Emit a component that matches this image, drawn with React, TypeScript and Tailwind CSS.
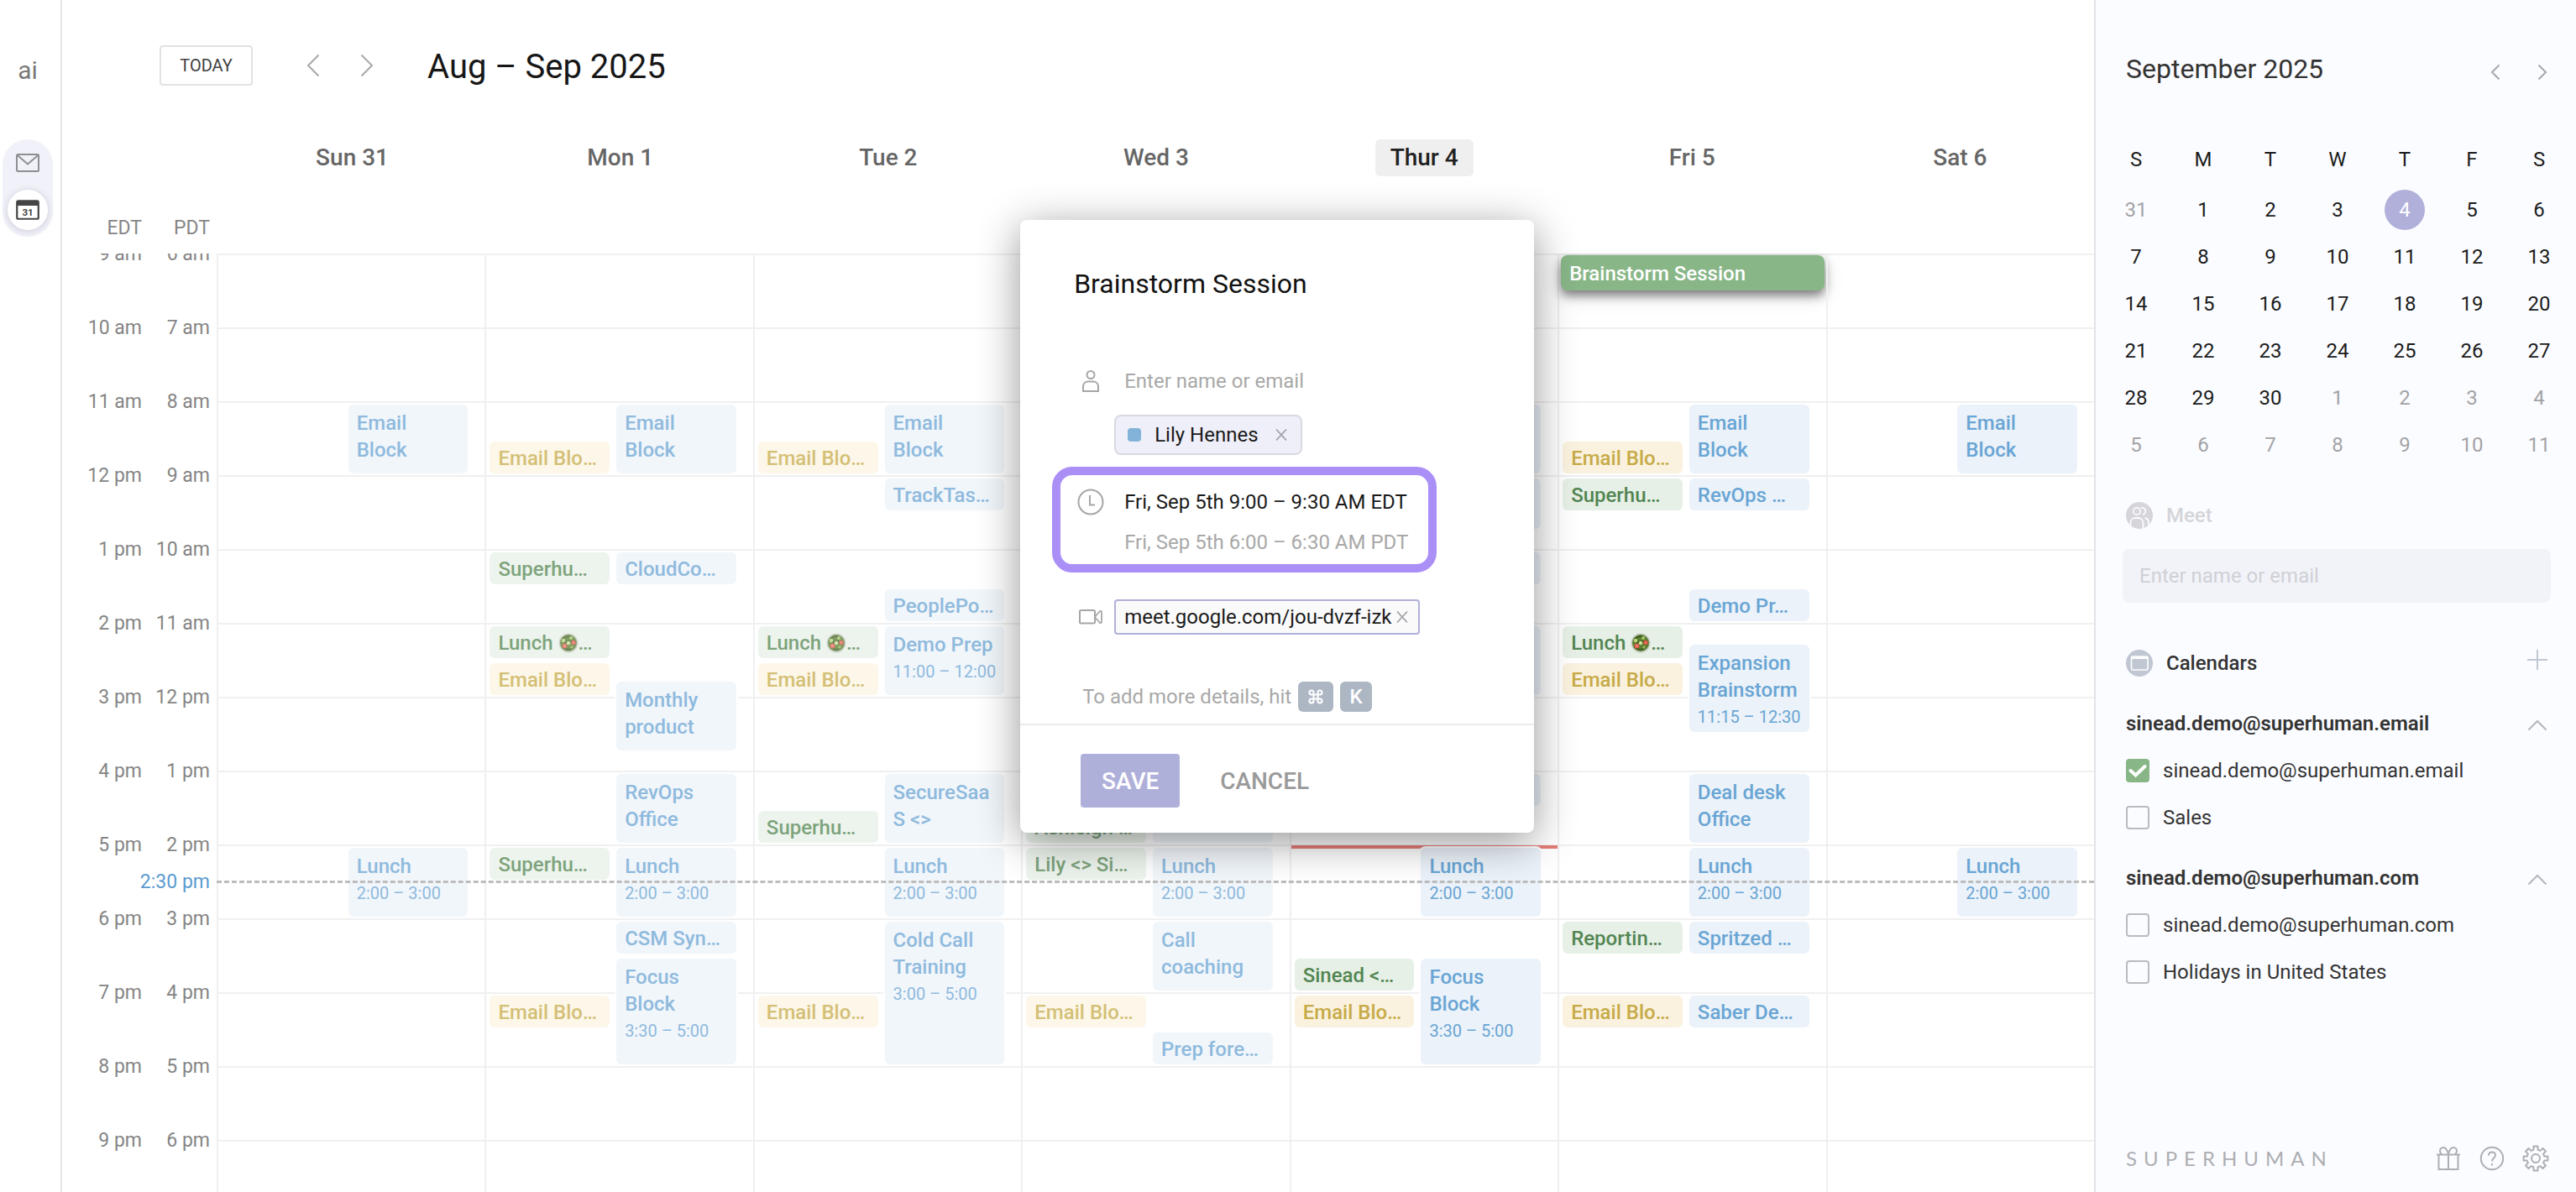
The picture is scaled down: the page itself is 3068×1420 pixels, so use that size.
import { useState } from "react";
import type { ReactNode } from "react";
import { clsx } from "clsx";
import { Command } from "lucide-react";

type Tone = "blue" | "green" | "yellow";

interface CalEvent {
  title: string;
  salad?: boolean;
  time?: string;
  tone: Tone;
  /** PDT hour, 24h clock. Quarter hours are .25 steps */
  start: number;
  end: number;
}

interface Day {
  label: string;
  past?: boolean;
  today?: boolean;
  events: CalEvent[];
}

const FIRST_HOUR = 6;

const ev = (tone: Tone, title: string, start: number, end: number, time?: string): CalEvent => ({
  tone,
  title,
  start,
  end,
  time,
});

const salad = (): CalEvent => ({ tone: "green", title: "Lunch", salad: true, start: 11, end: 11.5 });
const emailBlock = () => ev("blue", "Email Block", 8, 9);
const emailShort = (start: number) => ev("yellow", "Email Blo…", start, start + 0.5);
const lunch = () => ev("blue", "Lunch", 14, 15, "2:00 – 3:00");
const focus = () => ev("blue", "Focus Block", 15.5, 17, "3:30 – 5:00");

const days: Day[] = [
  { label: "Sun 31", past: true, events: [emailBlock(), lunch()] },
  {
    label: "Mon 1",
    past: true,
    events: [
      emailBlock(),
      emailShort(8.5),
      ev("green", "Superhu…", 10, 10.5),
      ev("blue", "CloudCo…", 10, 10.5),
      salad(),
      emailShort(11.5),
      ev("blue", "Monthly product", 11.75, 12.75),
      ev("blue", "RevOps Office", 13, 14),
      ev("green", "Superhu…", 14, 14.5),
      lunch(),
      ev("blue", "CSM Syn…", 15, 15.5),
      focus(),
      emailShort(16),
    ],
  },
  {
    label: "Tue 2",
    past: true,
    events: [
      emailBlock(),
      emailShort(8.5),
      ev("blue", "TrackTas…", 9, 9.5),
      ev("blue", "PeoplePo…", 10.5, 11),
      salad(),
      ev("blue", "Demo Prep", 11, 12, "11:00 – 12:00"),
      emailShort(11.5),
      ev("blue", "SecureSaaS <>", 13, 14),
      ev("green", "Superhu…", 13.5, 14),
      lunch(),
      ev("blue", "Cold Call Training", 15, 17, "3:00 – 5:00"),
      emailShort(16),
    ],
  },
  {
    label: "Wed 3",
    past: true,
    events: [
      ev("green", "Ashleigh …", 13.5, 14),
      ev("blue", "", 13, 14),
      ev("green", "Lily <> Si…", 14, 14.5),
      lunch(),
      ev("blue", "Call coaching", 15, 16),
      emailShort(16),
      ev("blue", "Prep fore…", 16.5, 17),
    ],
  },
  {
    label: "Thur 4",
    today: true,
    events: [
      ev("blue", "", 8, 9),
      ev("blue", "", 9, 9.75),
      ev("blue", "", 10, 10.5),
      ev("blue", "", 11, 12),
      ev("blue", "", 13, 13.5),
      lunch(),
      ev("green", "Sinead <…", 15.5, 16),
      focus(),
      emailShort(16),
    ],
  },
  {
    label: "Fri 5",
    events: [
      emailBlock(),
      emailShort(8.5),
      ev("green", "Superhu…", 9, 9.5),
      ev("blue", "RevOps …", 9, 9.5),
      ev("blue", "Demo Pr…", 10.5, 11),
      salad(),
      ev("blue", "Expansion Brainstorm", 11.25, 12.5, "11:15 – 12:30"),
      emailShort(11.5),
      ev("blue", "Deal desk Office", 13, 14),
      lunch(),
      ev("green", "Reportin…", 15, 15.5),
      ev("blue", "Spritzed …", 15, 15.5),
      emailShort(16),
      ev("blue", "Saber De…", 16, 16.5),
    ],
  },
  { label: "Sat 6", events: [emailBlock(), lunch()] },
];

const hours = [
  ["9 am", "6 am"],
  ["10 am", "7 am"],
  ["11 am", "8 am"],
  ["12 pm", "9 am"],
  ["1 pm", "10 am"],
  ["2 pm", "11 am"],
  ["3 pm", "12 pm"],
  ["4 pm", "1 pm"],
  ["5 pm", "2 pm"],
  ["6 pm", "3 pm"],
  ["7 pm", "4 pm"],
  ["8 pm", "5 pm"],
  ["9 pm", "6 pm"],
];

const tones: Record<Tone, { past: string; upcoming: string }> = {
  blue: { past: "bg-[#f1f6fb] text-[#8fbadd]", upcoming: "bg-[#ebf2f9] text-[#69a5d4]" },
  green: { past: "bg-[#edf4ed] text-[#7da37c]", upcoming: "bg-[#e6f0e6] text-[#528552]" },
  yellow: { past: "bg-[#fcf7e8] text-[#d4bf76]", upcoming: "bg-[#faf2de] text-[#c7aa48]" },
};

function Svg({ className, children, viewBox = "0 0 32 32" }: { className?: string; children: ReactNode; viewBox?: string }) {
  return (
    <svg
      viewBox={viewBox}
      fill="none"
      stroke="currentColor"
      strokeWidth={2}
      className={clsx("shrink-0", className)}
      aria-hidden="true"
    >
      {children}
    </svg>
  );
}

function Salad() {
  return (
    <svg viewBox="0 0 24 24" className="size-6 shrink-0" aria-hidden="true">
      <circle cx="12" cy="12" r="11.5" fill="#c9cdc2" />
      <circle cx="12" cy="12" r="10" fill="#5d7f35" />
      <path d="M4 9c3-5 8-6 11-4M5 17c5 4 10 3 13 0M7 12c4-3 7-1 10-2" stroke="#3f5e22" strokeWidth="2" fill="none" />
      <circle cx="6" cy="9" r="2.2" fill="#b9d97c" />
      <circle cx="15" cy="6" r="2" fill="#a6cc6a" />
      <circle cx="12" cy="12" r="2.2" fill="#cbe59a" />
      <circle cx="16" cy="17" r="1.8" fill="#8fb656" />
      <circle cx="18" cy="11.5" r="2.8" fill="#d8503f" />
      <circle cx="7.5" cy="15.5" r="3" fill="#dd5a48" />
      <circle cx="18" cy="11.5" r="1.1" fill="#f0907f" />
      <circle cx="7.5" cy="15.5" r="1.2" fill="#f0907f" />
    </svg>
  );
}

const gearPath = (() => {
  const pts: string[] = [];
  for (let i = 0; i < 8; i++) {
    const base = (i * Math.PI) / 4;
    [
      [-0.25, 10.6],
      [-0.17, 14.6],
      [0.17, 14.6],
      [0.25, 10.6],
    ].forEach(([a, r]) => {
      pts.push(`${16 + r * Math.sin(base + a)} ${16 - r * Math.cos(base + a)}`);
    });
  }
  return `M${pts.join("L")}Z`;
})();

function Close({ className }: { className?: string }) {
  return (
    <Svg viewBox="0 0 14 16" className={clsx("w-[14px] h-4", className)}>
      <path d="M1 1.5l12 13M13 1.5l-12 13" strokeWidth={1.8} />
    </Svg>
  );
}

function Rail() {
  return (
    <nav className="shrink-0 w-[74px] border-r-2 border-[#e6e6e8] pr-1.5 flex flex-col items-center pt-16">
      <span className="text-[30px] leading-10 text-[#7a7a7a]">ai</span>
      <div className="mt-[62px] w-[60px] rounded-full bg-[#f1f2f9] flex flex-col items-center pt-1 pb-2 gap-2">
        <a href="#mail" aria-label="Mail" className="size-12 flex items-center justify-center text-[#8e8e94]">
          <Svg viewBox="0 0 28 22" className="w-7 h-[22px]">
            <rect x="1" y="1" width="26" height="20" rx="1.5" />
            <path d="M1.5 1.8L14 12.5 26.5 1.8" />
          </Svg>
        </a>
        <a
          href="#calendar"
          aria-label="Calendar"
          className="size-12 rounded-full bg-white shadow-[0_1px_8px_rgba(60,60,90,0.22)] flex items-center justify-center"
        >
          <svg viewBox="0 0 28 24" className="w-7 h-6 shrink-0" aria-hidden="true">
            <rect x="1.25" y="1.25" width="25.5" height="21.5" rx="1.5" fill="#fff" stroke="#444" strokeWidth="2.2" />
            <path d="M1 1h26v6H1z" fill="#444" />
            <text x="14" y="18.5" textAnchor="middle" fontSize="11.5" fontWeight="700" fill="#444">
              31
            </text>
          </svg>
        </a>
      </div>
    </nav>
  );
}

function EventCard({ event, past }: { event: CalEvent; past?: boolean }) {
  const compact = event.end - event.start <= 0.5;
  const from = Math.round((event.start - FIRST_HOUR) * 4) + 1;
  const to = Math.round((event.end - FIRST_HOUR) * 4) + 1;

  return (
    <article
      style={{ gridRow: `${from} / ${to}` }}
      className={clsx(
        "relative mt-1 mb-0.5 rounded-md pl-2.5 pr-2 text-2xl leading-8 overflow-hidden ring-2 ring-white min-w-0",
        event.tone === "blue" ? "col-start-2" : "col-start-1",
        past ? tones[event.tone].past : tones[event.tone].upcoming,
        compact ? "flex items-center whitespace-nowrap pt-0.5" : "pt-1.5"
      )}
    >
      <h3 className={clsx("font-medium", event.salad && "flex items-center", !compact && "break-words")}>
        {event.salad ? (
          <>
            <span className="mr-1.5">{event.title}</span>
            <span className={clsx(past && "opacity-75")}>
              <Salad />
            </span>
            <span>…</span>
          </>
        ) : (
          event.title
        )}
      </h3>
      {event.time && <p className="-mr-1.5 text-xl leading-8 whitespace-nowrap">{event.time}</p>}
    </article>
  );
}

function WeekView() {
  return (
    <main className="relative flex-1 min-w-0 flex flex-col">
      <header className="shrink-0 h-[156px] flex items-center pl-[116px]">
        <button className="h-12 w-[111px] rounded border-2 border-[#e2e2e2] text-xl text-[#404040]">TODAY</button>
        <button aria-label="Previous week" className="ml-16 text-[#a8a8a8]">
          <Svg viewBox="0 0 16 28" className="w-4 h-7">
            <path d="M14.5 1.5L2 14l12.5 12.5" />
          </Svg>
        </button>
        <button aria-label="Next week" className="ml-12 text-[#a8a8a8]">
          <Svg viewBox="0 0 16 28" className="w-4 h-7">
            <path d="M1.5 1.5L14 14 1.5 26.5" />
          </Svg>
        </button>
        <h1 className="ml-16 pt-1 text-[40px] leading-[48px] text-[#171717]">Aug – Sep 2025</h1>
      </header>

      <div className="shrink-0 h-16 pl-[186px] grid grid-cols-7 items-center justify-items-center text-[28px] leading-8 font-medium text-[#666]">
        {days.map((day) => (
          <h2
            key={day.label}
            className={clsx("h-11 px-[18px] rounded-md flex items-center", day.today && "bg-[#efefef] text-[#222]")}
          >
            {day.label}
          </h2>
        ))}
      </div>

      <div className="shrink-0 h-[82px] w-[184px] grid grid-cols-[95px_81px] items-end text-right text-[23px] leading-8 text-[#858585] pb-3.5">
        <span>EDT</span>
        <span>PDT</span>
      </div>

      <div className="flex-1 min-h-0 flex overflow-hidden">
        <div className="relative shrink-0 w-[184px] text-[23px] leading-10 text-[#858585]">
          <div className="-mt-[19px]">
            {hours.map(([edt, pdt]) => (
              <div key={edt} className="h-[88px] grid grid-cols-[95px_81px] text-right">
                <span>{edt}</span>
                <span>{pdt}</span>
              </div>
            ))}
          </div>
          <span className="absolute right-2 top-[729px] text-[#5b9bd0]">2:30 pm</span>
        </div>

        <div className="relative flex-1 h-[1144px] grid grid-cols-7 bg-[linear-gradient(#f0f0f0_2px,transparent_2px)] bg-[length:100%_88px]">
          {days.map((day) => (
            <section
              key={day.label}
              aria-label={day.label}
              className="relative min-w-0 border-l-2 border-[#f0f0f0] pl-1 pr-5 grid grid-cols-2 gap-x-2 auto-rows-[22px]"
            >
              {day.today && <div className="absolute inset-x-0 top-[705px] h-1 bg-[#e67c78]" />}
              {day.events.map((event, i) => (
                <EventCard key={i} event={event} past={day.past} />
              ))}
              {day.label === "Fri 5" && (
                <article className="absolute left-0.5 right-0.5 top-0.5 h-[42px] rounded-lg bg-[#88b687] px-2.5 pt-0.5 flex items-center text-2xl font-medium text-white shadow-[0_6px_12px_rgba(0,0,0,0.45),0_6px_24px_rgba(0,0,0,0.15)]">
                  Brainstorm Session
                </article>
              )}
            </section>
          ))}
          <div className="absolute inset-x-0 top-[747px] border-t-3 border-dashed border-[#bdbdbd]" />
        </div>
      </div>

      <div className="absolute inset-y-0 left-[184px] right-0 pointer-events-none">
        <EventDialog />
      </div>
    </main>
  );
}

function EventDialog() {
  return (
    <form
      role="dialog"
      aria-label="Edit event"
      onSubmit={(e) => e.preventDefault()}
      className="pointer-events-auto absolute right-[calc(200%/7+28px)] top-[262px] w-[612px] rounded-lg bg-white text-2xl text-[#1a1a1a] shadow-[0_10px_50px_rgba(0,0,0,0.42)]"
    >
      <h2 className="pt-14 px-16 text-[32px] leading-10 text-[#111]">Brainstorm Session</h2>

      <div className="mt-[72px] px-16 grid grid-cols-[40px_1fr] gap-2 items-center">
        <span className="flex justify-center text-[#a6a6a6]">
          <Svg viewBox="0 0 22 28" className="w-[22px] h-7">
            <circle cx="11" cy="6.5" r="4.5" />
            <path d="M2 26v-5.500c0-3.500 2.500-6 6-6h6c3.500 0 6 2.500 6 6V26z" />
          </Svg>
        </span>
        <input
          aria-label="Guests"
          placeholder="Enter name or email"
          className="h-12 min-w-0 pl-3 outline-none placeholder:text-[#a8a8a8]"
        />
      </div>

      <div className="mt-4 ml-28 w-fit h-12 rounded-lg border-2 border-[#d9d9e2] bg-[#eeeff8] pl-3.5 pr-4 flex items-center">
        <span className="size-4 rounded bg-[#83b3d8]" />
        <span className="ml-4">Lily Hennes</span>
        <button type="button" aria-label="Remove Lily Hennes" className="ml-5 text-[#a3a3a8]">
          <Close />
        </button>
      </div>

      <div className="mt-3.5 ml-[38px] w-fit rounded-3xl border-10 border-[#aa8ff7] pl-4 pr-6 pt-2 pb-0.5 grid grid-cols-[40px_1fr] gap-x-2 leading-[48px]">
        <span className="flex justify-center items-center text-[#a6a6a6]">
          <Svg className="size-8">
            <circle cx="16" cy="16" r="14.500" />
            <path d="M15 8v11.500h6" />
          </Svg>
        </span>
        <p className="pl-3">Fri, Sep 5th 9:00 – 9:30 AM EDT</p>
        <p className="col-start-2 pl-3 text-[#a8a8a8]">Fri, Sep 5th 6:00 – 6:30 AM PDT</p>
      </div>

      <div className="mt-8 px-16 grid grid-cols-[40px_1fr] gap-2 items-center">
        <span className="flex justify-center text-[#a6a6a6]">
          <Svg viewBox="0 0 28 18" className="w-7 h-[18px]">
            <rect x="1" y="1" width="18" height="15.500" rx="1.5" />
            <path d="M19 9l5.500-6.500c1-1 2.500-.8 2.500.7v11.600c0 1.500-1.500 1.700-2.500.7z" strokeWidth={1.8} />
          </Svg>
        </span>
        <div className="w-[364px] h-[42px] rounded border-2 border-[#b0b0da] bg-[#fafafb] pl-2.5 pr-3 flex items-center">
          <input
            aria-label="Video call link"
            defaultValue="meet.google.com/jou-dvzf-izk"
            className="min-w-0 flex-1 outline-none"
          />
          <button type="button" aria-label="Remove video call" className="text-[#a3a3a8]">
            <Close />
          </button>
        </div>
      </div>

      <div className="mt-14 pl-[74px] flex items-center text-[#a8a8a8]">
        <span>To add more details, hit</span>
        <kbd className="ml-2 h-9 w-[42px] rounded-md bg-[#adb7c4] text-white flex items-center justify-center">
          <Command className="size-5" strokeWidth={2.5} />
        </kbd>
        <kbd className="ml-2 h-9 w-[38px] rounded-md bg-[#adb7c4] text-white font-[Roboto] font-medium flex items-center justify-center">
          K
        </kbd>
      </div>

      <div className="mt-3.5 border-t-2 border-[#ebebeb] pt-[34px] pb-[30px] pl-[72px] flex items-center text-[28px] font-medium">
        <button type="submit" className="h-16 w-[118px] pt-0.5 rounded bg-[#afb0da] text-white">
          SAVE
        </button>
        <button type="button" className="h-16 px-12 pt-0.5 text-[#9a9a9a]">
          CANCEL
        </button>
      </div>
    </form>
  );
}

const miniDays = [31, ...Array.from({ length: 30 }, (_, i) => i + 1), ...Array.from({ length: 11 }, (_, i) => i + 1)];

const accounts = [
  {
    name: "sinead.demo@superhuman.email",
    calendars: [
      { id: "own-email", name: "sinead.demo@superhuman.email" },
      { id: "sales", name: "Sales" },
    ],
  },
  {
    name: "sinead.demo@superhuman.com",
    calendars: [
      { id: "own-com", name: "sinead.demo@superhuman.com" },
      { id: "holidays", name: "Holidays in United States" },
    ],
  },
];

function Sidebar() {
  const [checked, setChecked] = useState<Record<string, boolean>>({ "own-email": true });

  return (
    <aside className="shrink-0 w-[574px] border-l-2 border-[#e2e3e8] bg-[#fbfcff] flex flex-col text-2xl text-[#333]">
      <div className="pt-[50px] pl-9 pr-[34px] flex items-center">
        <h2 className="flex-1 text-[32px] leading-[64px]">September 2025</h2>
        <button aria-label="Previous month" className="mt-2 text-[#a8a8ac]">
          <Svg viewBox="0 0 12 20" className="w-3 h-5">
            <path d="M10.500 1.500L2 10l8.500 8.500" />
          </Svg>
        </button>
        <button aria-label="Next month" className="mt-2 ml-11 text-[#a8a8ac]">
          <Svg viewBox="0 0 12 20" className="w-3 h-5">
            <path d="M1.500 1.500L10 10l-8.500 8.500" />
          </Svg>
        </button>
      </div>

      <div className="mt-12 pl-2 pr-1 grid grid-cols-7 justify-items-center text-[#1c1c1c]">
        {["S", "M", "T", "W", "T", "F", "S"].map((d, i) => (
          <span key={i} className="h-[60px] leading-[56px]">
            {d}
          </span>
        ))}
        {miniDays.map((d, i) => (
          <button
            key={i}
            className={clsx(
              "my-1 size-12 rounded-full",
              (i === 0 || i > 30) && "text-[#a3a3a6]",
              i === 4 && "bg-[#b0b0da] text-white"
            )}
          >
            {d}
          </button>
        ))}
      </div>

      <div className="mt-10 pl-9 flex items-center h-8">
        <svg viewBox="0 0 32 32" className="size-8 shrink-0" aria-hidden="true">
          <circle cx="16" cy="16" r="16" fill="#d6d6da" />
          <g fill="none" stroke="#fbfcff" strokeWidth="1.8">
            <circle cx="13" cy="11" r="4.200" />
            <path d="M18 6.800a4.200 4.200 0 0 1 2 8.200" />
            <path d="M5.500 28v-3c0-3.500 2.500-6 6-6h3c3.500 0 6 2.500 6 6v7M22.500 19c3 .6 4.500 3 4.500 5.500V28" />
          </g>
        </svg>
        <label htmlFor="meet" className="ml-4 font-medium text-[#d4d5d9]">
          Meet
        </label>
      </div>
      <input
        id="meet"
        placeholder="Enter name or email"
        className="mt-6 ml-8 mr-[30px] h-16 rounded-lg bg-[#f2f3f9] px-5 outline-none placeholder:text-[#cfd0d6]"
      />

      <div className="mt-14 pl-9 pr-[34px] flex items-center h-8">
        <svg viewBox="0 0 32 32" className="size-8 shrink-0" aria-hidden="true">
          <circle cx="16" cy="16" r="16" fill="#c0c7d2" />
          <rect x="6.500" y="8" width="19.500" height="16" rx="1.500" fill="none" stroke="#fff" strokeWidth="1.600" />
          <path d="M7 8.500h19v2.500H7z" fill="#fff" />
        </svg>
        <h3 className="ml-4 flex-1 font-medium">Calendars</h3>
        <button aria-label="Add calendar" className="-mt-2 text-[#c0c7d2]">
          <Svg viewBox="0 0 24 24" className="size-6">
            <path d="M12 0v24M0 12h24" />
          </Svg>
        </button>
      </div>

      <div className="mt-7 flex flex-col gap-4 pl-9 pr-[34px]">
        {accounts.map((account) => (
          <section key={account.name}>
            <div className="h-14 flex items-center justify-between">
              <h4 className="font-semibold">{account.name}</h4>
              <button aria-label={`Collapse ${account.name}`} className="mt-1 text-[#b4b6bc]">
                <Svg viewBox="0 0 24 14" className="w-6 h-3.5">
                  <path d="M1.500 12.500L12 2l10.500 10.500" />
                </Svg>
              </button>
            </div>
            {account.calendars.map((cal) => (
              <label key={cal.id} className="h-14 flex items-center">
                <span className="grid size-7">
                  <input
                    type="checkbox"
                    checked={!!checked[cal.id]}
                    onChange={(e) => setChecked({ ...checked, [cal.id]: e.target.checked })}
                    className="col-start-1 row-start-1 appearance-none size-7 rounded border-2 border-[#b9bbc0] checked:border-[#88b687] checked:bg-[#88b687]"
                  />
                  {checked[cal.id] && (
                    <Svg viewBox="0 0 28 28" className="col-start-1 row-start-1 size-7 text-white pointer-events-none">
                      <path d="M5.500 14l6 5.500L22.500 9" strokeWidth={4} strokeLinecap="round" />
                    </Svg>
                  )}
                </span>
                <span className="ml-4">{cal.name}</span>
              </label>
            ))}
          </section>
        ))}
      </div>

      <footer className="mt-auto pb-6 pl-9 pr-8 flex items-center text-[#aeaeb2]">
        <span className="flex-1 font-[Lato] tracking-[8px] leading-8">SUPERHUMAN</span>
        <button aria-label="Gifts">
          <Svg className="size-8">
            <path d="M2 11.500h28M4.500 11.500v17.500h23V11.500M16 11.500V29" />
            <path d="M16 11c-1-4-2.500-8-6-8-2.500 0-4 2-4 4 0 1.500.7 3 2 4M16 11c1-4 2.500-8 6-8 2.500 0 4 2 4 4 0 1.500-.7 3-2 4" />
          </Svg>
        </button>
        <button aria-label="Help" className="ml-5">
          <Svg className="size-8">
            <circle cx="16" cy="16" r="13.200" />
            <path d="M12 12.500c0-2.500 1.700-4 4-4s4 1.500 4 3.700c0 3.300-4 3.500-4 7.300M16 22v2.500" />
          </Svg>
        </button>
        <button aria-label="Settings" className="ml-5">
          <Svg className="size-8">
            <path d={gearPath} strokeLinejoin="round" />
            <circle cx="16" cy="16" r="5" />
          </Svg>
        </button>
      </footer>
    </aside>
  );
}

export default function App() {
  return (
    <div className="h-screen overflow-hidden flex bg-white font-[Roboto,'Noto_Sans',sans-serif]">
      <Rail />
      <WeekView />
      <Sidebar />
    </div>
  );
}
